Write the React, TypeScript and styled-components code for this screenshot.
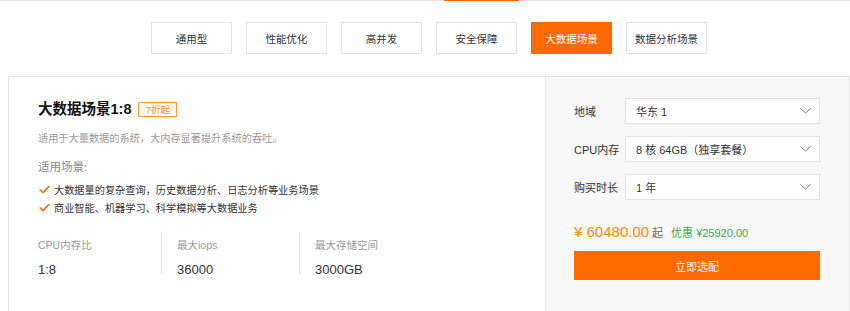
import styled, { createGlobalStyle } from "styled-components";

const GlobalStyle = createGlobalStyle`
  html, body {
    margin: 0;
    padding: 0;
    background: #fff;
    height: 311px;
    overflow: hidden;
  }
  body {
    font-family: "Liberation Sans", "Noto Sans CJK SC", sans-serif;
    color: #333;
  }
`;

const tabs = ["通用型", "性能优化", "高并发", "安全保障", "大数据场景", "数据分析场景"];
const active = 4;

const features = [
  "大数据量的复杂查询，历史数据分析、日志分析等业务场景",
  "商业智能、机器学习、科学模拟等大数据业务",
];

const stats = [
  { label: "CPU内存比", value: "1:8" },
  { label: "最大iops", value: "36000" },
  { label: "最大存储空间", value: "3000GB" },
];

const options = [
  { label: "地域", value: "华东 1" },
  { label: "CPU内存", value: "8 核 64GB（独享套餐）" },
  { label: "购买时长", value: "1 年" },
];

const Chevron = () => (
  <svg width="11" height="6" viewBox="0 0 11 6">
    <polyline points="0.5,0.5 5.5,5 10.5,0.5" fill="none" stroke="#777" strokeWidth="1" />
  </svg>
);

const Check = () => (
  <svg width="11" height="9" viewBox="0 0 11 9">
    <polyline points="0.8,4.5 4,7.6 10.2,1" fill="none" stroke="#ff6a00" strokeWidth="1.6" />
  </svg>
);

export default function App() {
  return (
    <>
      <GlobalStyle />
      <TopRule>
        <Indicator />
      </TopRule>
      <Page>
        <TabBar>
          {tabs.map((t, i) => (
            <Tab key={t} $active={i === active}>
              {t}
            </Tab>
          ))}
        </TabBar>
        <Card>
          <Info>
            <TitleRow>
              <Title>大数据场景1:8</Title>
              <Badge>7折起</Badge>
            </TitleRow>
            <Desc>适用于大量数据的系统，大内存显著提升系统的吞吐。</Desc>
            <SubTitle>适用场景:</SubTitle>
            <FeatureList>
              {features.map((f) => (
                <Feature key={f}>
                  <Check />
                  <span>{f}</span>
                </Feature>
              ))}
            </FeatureList>
            <Stats>
              {stats.map((s, i) => (
                <Stat key={s.label} $first={i === 0}>
                  <StatLabel>{s.label}</StatLabel>
                  <StatValue>{s.value}</StatValue>
                </Stat>
              ))}
            </Stats>
          </Info>
          <Config>
            <Form>
              {options.map((o) => (
                <FormRow key={o.label}>
                  <FieldLabel>{o.label}</FieldLabel>
                  <Select>
                    <span>{o.value}</span>
                    <Chevron />
                  </Select>
                </FormRow>
              ))}
            </Form>
            <PriceRow>
              <Price>¥ 60480.00</Price>
              <From>起</From>
              <Discount>优惠 ¥25920.00</Discount>
            </PriceRow>
            <BuyButton>立即选配</BuyButton>
          </Config>
        </Card>
      </Page>
    </>
  );
}

const TopRule = styled.div`
  height: 1px;
  background: #e2e2e2;
  display: flex;
`;

const Indicator = styled.div`
  margin-left: 444px;
  width: 75px;
  background: #ff6a00;
`;

const Page = styled.div`
  margin-left: 8px;
  width: 842px;
`;

const TabBar = styled.div`
  display: flex;
  justify-content: center;
  gap: 14px;
  margin-top: 21px;
`;

const Tab = styled.div<{ $active?: boolean }>`
  box-sizing: border-box;
  width: 81px;
  height: 32px;
  display: flex;
  align-items: center;
  justify-content: center;
  font-size: 10.5px;
  border: 1px solid ${(p) => (p.$active ? "#ff6a00" : "#e3e3e3")};
  background: ${(p) => (p.$active ? "#ff6a00" : "#fff")};
  color: ${(p) => (p.$active ? "#fff" : "#333")};
`;

const Card = styled.div`
  margin-top: 22px;
  display: flex;
  border: 1px solid #e3e3e3;
  height: 250px;
`;

const Info = styled.div`
  box-sizing: border-box;
  width: 536px;
  padding: 22px 0 0 29px;
  background: #fff;
`;

const TitleRow = styled.div`
  display: flex;
  align-items: center;
  height: 20px;
`;

const Title = styled.div`
  font-size: 14.5px;
  font-weight: bold;
  color: #111;
  line-height: 20px;
`;

const Badge = styled.div`
  margin-left: 7px;
  box-sizing: border-box;
  width: 39px;
  height: 15px;
  border: 1px solid #ff9a2e;
  color: #ff8a1a;
  font-size: 9.5px;
  display: flex;
  align-items: center;
  justify-content: center;
`;

const Desc = styled.div`
  margin-top: 12px;
  font-size: 10.2px;
  line-height: 16px;
  color: #999;
`;

const SubTitle = styled.div`
  margin-top: 12px;
  font-size: 11.5px;
  line-height: 16px;
  color: #888;
`;

const FeatureList = styled.div`
  margin-top: 5px;
  display: flex;
  flex-direction: column;
`;

const Feature = styled.div`
  display: flex;
  align-items: center;
  gap: 4px;
  height: 18px;
  font-size: 10.2px;
  color: #333;
  padding-left: 1px;
`;

const Stats = styled.div`
  display: flex;
  margin-top: 17px;
`;

const Stat = styled.div<{ $first?: boolean }>`
  box-sizing: border-box;
  height: 41px;
  width: ${(p) => (p.$first ? "123px" : "138px")};
  padding: 4px 0 0 ${(p) => (p.$first ? "0" : "15px")};
  border-left: ${(p) => (p.$first ? "none" : "1px solid #e6e6e6")};
`;

const StatLabel = styled.div`
  font-size: 10.5px;
  line-height: 16px;
  color: #999;
`;

const StatValue = styled.div`
  margin-top: 8px;
  font-size: 13px;
  line-height: 18px;
  color: #333;
`;

const Config = styled.div`
  flex: 1;
  box-sizing: border-box;
  padding: 21px 29px 0 28px;
  background: #f8f8f8;
  border-left: 1px solid #e8e8e8;
  display: flex;
  flex-direction: column;
`;

const Form = styled.div`
  display: flex;
  flex-direction: column;
  gap: 12px;
`;

const FormRow = styled.div`
  display: flex;
  align-items: center;
  height: 26px;
`;

const FieldLabel = styled.div`
  width: 51px;
  font-size: 11px;
  color: #333;
`;

const Select = styled.div`
  flex: 1;
  box-sizing: border-box;
  height: 26px;
  border: 1px solid #e3e3e3;
  background: #fff;
  padding: 0 8px 0 10px;
  display: flex;
  align-items: center;
  justify-content: space-between;
  font-size: 11px;
  color: #333;
`;

const PriceRow = styled.div`
  display: flex;
  align-items: baseline;
  margin-top: 23px;
  height: 20px;
`;

const Price = styled.span`
  font-size: 15px;
  color: #ff8a00;
`;

const From = styled.span`
  margin-left: 3px;
  font-size: 11px;
  color: #666;
`;

const Discount = styled.span`
  margin-left: 8px;
  font-size: 11px;
  color: #2fa94e;
`;

const BuyButton = styled.div`
  margin-top: 8px;
  height: 29px;
  background: #ff6a00;
  color: #fff;
  font-size: 11px;
  display: flex;
  align-items: center;
  justify-content: center;
`;
